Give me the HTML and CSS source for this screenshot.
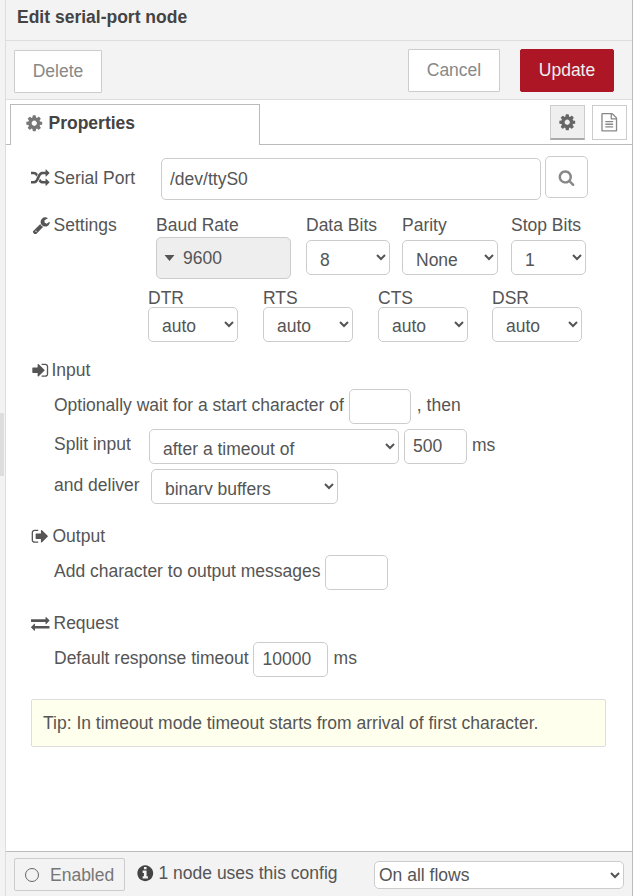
FILE: index.html
```html
<!DOCTYPE html>
<html lang="en">
<head>
<meta charset="UTF-8">
<title>Edit serial-port node</title>
<link rel="stylesheet" href="styles.css">
</head>
<body>

<div class="gutter"><div class="handle"></div></div>

<div class="tray">
  <div class="tray-title">Edit serial-port node</div>

  <div class="tray-toolbar">
    <button class="btn btn-delete">Delete</button>
    <div class="toolbar-right">
      <button class="btn btn-cancel">Cancel</button>
      <button class="btn btn-update">Update</button>
    </div>
  </div>

  <div class="tabs">
    <div class="tab">
      <svg class="icon icon-tab" viewBox="0 0 1792 1792"><path d="M1152 896q0-106-75-181t-181-75-181 75-75 181 75 181 181 75 181-75 75-181zm512-109v222q0 12-8 23t-20 13l-185 28q-19 54-39 91 35 50 107 138 10 12 10 25t-9 23q-27 37-99 108t-94 71q-12 0-26-9l-138-108q-44 23-91 38-16 136-29 186-7 28-36 28h-222q-14 0-24.500-8.500t-11.500-21.500l-28-184q-49-16-90-37l-141 107q-10 9-25 9-14 0-25-11-126-114-165-168-7-10-7-23 0-12 8-23 15-21 51-66.500t54-70.500q-27-50-41-99l-183-27q-13-2-21-12.500t-8-23.500v-222q0-12 8-23t19-13l186-28q14-46 39-92-40-57-107-138-10-12-10-24 0-10 9-23 26-36 98.500-107.500t94.500-71.500q13 0 26 10l138 107q44-23 91-38 16-136 29-186 7-28 36-28h222q14 0 24.500 8.500t11.500 21.500l28 184q49 16 90 37l142-107q9-9 24-9 13 0 25 10 129 119 165 170 7 8 7 22 0 12-8 23-15 21-51 66.500t-54 70.500q26 50 41 98l183 28q13 2 21 12.500t8 23.500z"/></svg>
      Properties
    </div>
    <div class="tab-buttons">
      <button class="tab-btn active"><svg class="icon icon-btn" viewBox="0 0 1792 1792"><path d="M1152 896q0-106-75-181t-181-75-181 75-75 181 75 181 181 75 181-75 75-181zm512-109v222q0 12-8 23t-20 13l-185 28q-19 54-39 91 35 50 107 138 10 12 10 25t-9 23q-27 37-99 108t-94 71q-12 0-26-9l-138-108q-44 23-91 38-16 136-29 186-7 28-36 28h-222q-14 0-24.500-8.500t-11.500-21.500l-28-184q-49-16-90-37l-141 107q-10 9-25 9-14 0-25-11-126-114-165-168-7-10-7-23 0-12 8-23 15-21 51-66.500t54-70.500q-27-50-41-99l-183-27q-13-2-21-12.500t-8-23.500v-222q0-12 8-23t19-13l186-28q14-46 39-92-40-57-107-138-10-12-10-24 0-10 9-23 26-36 98.500-107.500t94.500-71.500q13 0 26 10l138 107q44-23 91-38 16-136 29-186 7-28 36-28h222q14 0 24.500 8.500t11.500 21.500l28 184q49 16 90 37l142-107q9-9 24-9 13 0 25 10 129 119 165 170 7 8 7 22 0 12-8 23-15 21-51 66.500t-54 70.500q26 50 41 98l183 28q13 2 21 12.500t8 23.500z"/></svg></button>
      <button class="tab-btn"><svg class="icon icon-btn icon-doc" viewBox="0 0 1792 1792"><path d="M1596 380q28 28 48 76t20 88v1152q0 40-28 68t-68 28h-1344q-40 0-68-28t-28-68v-1600q0-40 28-68t68-28h896q40 0 88 20t76 48zm-444-244v376h376q-10-29-22-41l-313-313q-12-12-41-22zm384 1528v-1024h-416q-40 0-68-28t-28-68v-416h-768v1536h1280zm-1024-864q0-14 9-23t23-9h704q14 0 23 9t9 23v64q0 14-9 23t-23 9h-704q-14 0-23-9t-9-23v-64zm736 224q14 0 23 9t9 23v64q0 14-9 23t-23 9h-704q-14 0-23-9t-9-23v-64q0-14 9-23t23-9h704zm0 256q14 0 23 9t9 23v64q0 14-9 23t-23 9h-704q-14 0-23-9t-9-23v-64q0-14 9-23t23-9h704z"/></svg></button>
    </div>
  </div>

  <div class="form">
    <div class="row-port">
      <label class="row-label">
        <svg class="icon" viewBox="0 0 1792 1792"><path d="M666 481q-60 92-137 273-22-45-37-72.500t-40.500-63.500-51-56.500-63-35-81.500-14.500h-224q-14 0-23-9t-9-23v-192q0-14 9-23t23-9h224q250 0 410 225zm1126 799q0 14-9 23l-320 320q-9 9-23 9-13 0-22.500-9.500t-9.500-22.500v-192q-32 0-85 .5t-81 1-73-1-71-5-64-10.500-63-18.500-58-28.500-59-40-55-53.500-56-69.500q59-93 136-273 22 45 37 72.500t40.500 63.500 51 56.500 63 35 81.500 14.500h256v-192q0-14 9-23t23-9q12 0 24 10l319 319q9 9 9 23zm0-896q0 14-9 23l-320 320q-9 9-23 9-13 0-22.500-9.500t-9.500-22.500v-192h-256q-48 0-87 15t-69 45-51 61.500-45 77.500q-32 62-78 171-29 66-49.500 111t-54 105-64 100-74 83-90 68.500-106.500 42-128 16.500h-224q-14 0-23-9t-9-23v-192q0-14 9-23t23-9h224q48 0 87-15t69-45 51-61.500 45-77.500q32-62 78-171 29-66 49.500-111t54-105 64-100 74-83 90-68.500 106.500-42 128-16.500h256v-192q0-14 9-23t23-9q12 0 24 10l319 319q9 9 9 23z"/></svg>
        Serial Port
      </label>
      <input class="field field-port" type="text" value="/dev/ttyS0">
      <button class="search-btn"><svg class="icon icon-search" viewBox="0 0 1792 1792"><path d="M1216 832q0-185-131.500-316.500t-316.500-131.500-316.500 131.500-131.500 316.500 131.500 316.500 316.500 131.500 316.500-131.500 131.500-316.500zm512 832q0 52-38 90t-90 38q-54 0-90-38l-343-342q-179 124-399 124-143 0-273.500-55.500t-225-150-150-225-55.500-273.500 55.500-273.500 150-225 225-150 273.500-55.500 273.500 55.500 225 150 150 225 55.500 273.500q0 220-124 399l343 343q37 37 37 90z"/></svg></button>
    </div>

    <div class="row-settings">
      <label class="row-label settings-label">
        <svg class="icon" viewBox="0 0 1792 1792"><path d="M448 1472q0-26-19-45t-45-19-45 19-19 45 19 45 45 19 45-19 19-45zm644-420l-682 682q-37 37-90 37-52 0-91-37l-106-108q-38-36-38-90 0-53 38-91l681-681q39 98 114.500 173.500t173.500 114.500zm634-435q0 39-23 106-47 134-164.500 217.500t-258.500 83.500q-185 0-316.500-131.500t-131.500-316.500 131.500-316.500 316.500-131.500q58 0 121.500 16.500t107.500 46.500q16 11 16 28t-16 28l-293 169v224l193 107q5-3 79-48.500t135.500-81 70.500-35.500q15 0 23.500 10t8.500 25z"/></svg>
        Settings
      </label>
      <div class="col col-baud">
        <span class="col-label">Baud Rate</span>
        <div class="baud">
          <svg class="caret" viewBox="0 0 10 6"><polygon points="0,0 10,0 5,6"/></svg>
          9600
        </div>
      </div>
      <div class="col col-data">
        <span class="col-label">Data Bits</span>
        <select class="field sel sel-data"><option>8</option></select>
      </div>
      <div class="col col-parity">
        <span class="col-label">Parity</span>
        <select class="field sel sel-parity"><option>None</option></select>
      </div>
      <div class="col col-stop">
        <span class="col-label">Stop Bits</span>
        <select class="field sel sel-stop"><option>1</option></select>
      </div>
    </div>

    <div class="row-lines">
      <div class="line"><span class="line-label">DTR</span><select class="field sel sel-line"><option>auto</option></select></div>
      <div class="line"><span class="line-label">RTS</span><select class="field sel sel-line"><option>auto</option></select></div>
      <div class="line line-cts"><span class="line-label">CTS</span><select class="field sel sel-line"><option>auto</option></select></div>
      <div class="line line-last"><span class="line-label">DSR</span><select class="field sel sel-line"><option>auto</option></select></div>
    </div>

    <div class="heading heading-input">
      <svg class="icon" viewBox="0 0 1792 1792"><path d="M1312 896q0 26-19 45l-544 544q-19 19-45 19t-45-19-19-45v-288h-448q-26 0-45-19t-19-45v-384q0-26 19-45t45-19h448v-288q0-26 19-45t45-19 45 19l544 544q19 19 19 45zm352-352v704q0 119-84.500 203.500t-203.500 84.500h-320q-13 0-22.500-9.500t-9.500-22.500q0-4-1-20t-.5-26.500 3-23.500 10-19.500 20.500-6.500h320q66 0 113-47t47-113v-704q0-66-47-113t-113-47h-312l-11.500-1-11.500-3-8-5.500-7-9-2-13.500q0-4-1-20t-.5-26.500 3-23.500 10-19.500 20.500-6.500h320q119 0 203.500 84.500t84.500 203.500z"/></svg>
      Input
    </div>
    <div class="sub sub-start">
      <span>Optionally wait for a start character of</span>
      <input class="field small" type="text">
      <span class="sub-then">, then</span>
    </div>
    <div class="sub sub-split">
      <span class="sub-label sub-label-split">Split input</span>
      <select class="field sel sel-split"><option>after a timeout of</option></select>
      <input class="field small small-split" type="text" value="500">
      <span class="sub-unit">ms</span>
    </div>
    <div class="sub sub-deliver">
      <span class="sub-label sub-label-deliver">and deliver</span>
      <select class="field sel sel-deliver"><option>binary buffers</option></select>
    </div>

    <div class="heading heading-output">
      <svg class="icon" viewBox="0 0 1792 1792"><path d="M704 1440q0 4 1 20t.5 26.500-3 23.500-10 19.500-20.500 6.500h-320q-119 0-203.500-84.500t-84.500-203.500v-704q0-119 84.500-203.500t203.500-84.500h320q13 0 22.500 9.500t9.500 22.500q0 4 1 20t.5 26.500-3 23.500-10 19.500-20.500 6.500h-320q-66 0-113 47t-47 113v704q0 66 47 113t113 47h312l11.500 1 11.500 3 8 5.500 7 9 2 13.500zm928-544q0 26-19 45l-544 544q-19 19-45 19t-45-19-19-45v-288h-448q-26 0-45-19t-19-45v-384q0-26 19-45t45-19h448v-288q0-26 19-45t45-19 45 19l544 544q19 19 19 45z"/></svg>
      Output
    </div>
    <div class="sub sub-add">
      <span>Add character to output messages</span>
      <input class="field small small-add" type="text">
    </div>

    <div class="heading heading-request">
      <svg class="icon" viewBox="0 0 1792 1792"><path d="M1792 1184v192q0 13-9.500 22.500t-22.500 9.500h-1376v192q0 13-9.500 22.500t-22.500 9.500q-12 0-24-10l-319-320q-9-9-9-22 0-14 9-23l320-320q9-9 23-9 13 0 22.500 9.500t9.500 22.500v192h1376q13 0 22.500 9.500t9.500 22.500zm0-544q0 14-9 23l-320 320q-9 9-23 9-13 0-22.500-9.500t-9.500-22.500v-192h-1376q-13 0-22.500-9.500t-9.500-22.500v-192q0-13 9.500-22.500t22.500-9.500h1376v-192q0-14 9-23t23-9q12 0 24 10l319 319q9 9 9 23z"/></svg>
      Request
    </div>
    <div class="sub sub-timeout">
      <span>Default response timeout</span>
      <input class="field timeout" type="text" value="10000">
      <span class="sub-ms">ms</span>
    </div>

    <div class="tip">Tip: In timeout mode timeout starts from arrival of first character.</div>
  </div>

  <div class="footer">
    <button class="enabled"><span class="ring"></span>Enabled</button>
    <div class="config-note">
      <svg class="icon icon-info" viewBox="0 0 1792 1792"><path d="M1152 1376v-160q0-14-9-23t-23-9h-96v-512q0-14-9-23t-23-9h-320q-14 0-23 9t-9 23v160q0 14 9 23t23 9h96v320h-96q-14 0-23 9t-9 23v160q0 14 9 23t23 9h448q14 0 23-9t9-23zm-128-896v-160q0-14-9-23t-23-9h-192q-14 0-23 9t-9 23v160q0 14 9 23t23 9h192q14 0 23-9t9-23zm640 416q0 209-103 385.500t-279.500 279.500-385.500 103-385.500-103-279.500-279.500-103-385.500 103-385.500 279.500-279.500 385.500-103 385.500 103 279.500 279.500 103 385.500z"/></svg>
      1 node uses this config
    </div>
    <select class="field sel sel-scope"><option>On all flows</option></select>
  </div>
</div>

</body>
</html>
```

FILE: styles.css
```css
* { box-sizing: border-box; }
html, body { height: 100%; }
body { margin: 0; display: flex; height: 896px; overflow: hidden; background: #fff; color: #555; font-family: "Liberation Sans", Arial, sans-serif; font-size: 17.5px; }

.gutter { width: 6px; flex: none; background: #f3f3f3; border-right: 1px solid #ddd; position: relative; }
.handle { position: absolute; left: 0; top: 413px; width: 4px; height: 63px; background: #ddd; }

.tray { width: 627px; flex: none; display: flex; flex-direction: column; border-right: 1px solid #bbb; background: #fff; }

.tray-title { height: 41px; padding: 7px 11px 0; background: #f3f3f3; border-bottom: 1px solid #ddd; font-weight: bold; color: #444; line-height: 20px; }

.tray-toolbar { height: 59px; display: flex; justify-content: space-between; padding: 8px 18px 0 8px; background: #f3f3f3; border-bottom: 1px solid #ddd; }
.toolbar-right { display: flex; gap: 20px; }
.btn { height: 43px; font: inherit; background: #fff; color: #888; border: 1px solid #ccc; border-radius: 1px; padding: 0; }
.btn-delete { width: 88px; margin-top: 1px; }
.btn-cancel { width: 92px; }
.btn-update { width: 94px; background: #ad1625; border-color: #ad1625; color: #eee; border-radius: 2px; }

.tabs { height: 45px; display: flex; justify-content: space-between; padding: 4px 5px 0 4px; border-bottom: 1px solid #bbb; }
.tab { width: 250px; height: 41px; display: flex; align-items: center; gap: 5px; padding: 0 0 4px 14px; border: 1px solid #bbb; border-bottom: none; background: #fff; font-weight: bold; color: #444; position: relative; z-index: 1; }
.tab-buttons { display: flex; gap: 7px; padding-top: 1px; }
.tab-btn { width: 35px; height: 35px; padding: 0; display: flex; align-items: center; justify-content: center; background: #fff; border: 1px solid #ccc; color: #666; }
.tab-btn.active { background: #efefef; border-bottom: 2px solid #aaa; }

.icon { width: 18.5px; height: 18.5px; flex: none; fill: #555; }
.icon-tab { fill: #777; }
.icon-btn { fill: #666; }
.icon-doc { fill: #888; }
.icon-search { width: 17px; height: 17px; fill: #888; }
.icon-info { fill: #444; }

.form { flex: 1; padding: 0 0 0 25px; }

.field { font: inherit; color: #555; background: #fff; border: 1px solid #ccc; border-radius: 5px; height: 35px; }
input.field { padding: 0 8px; }
select.field { padding: 3px 0 0 9px; }

.row-label { display: flex; align-items: center; gap: 4px; line-height: 20px; }

.row-port { display: flex; align-items: flex-start; height: 42px; margin-top: 11px; }
.row-port .row-label { width: 130px; margin-top: 12px; }
.field-port { width: 380px; height: 42px; margin-top: 2px; }
.search-btn { width: 43px; height: 42px; margin-left: 4px; padding: 0; display: flex; align-items: center; justify-content: center; background: #fff; border: 1px solid #ccc; border-radius: 5px; }

.row-settings { display: flex; height: 67px; margin-top: 17px; }
.settings-label { width: 125px; height: 20px; padding-left: 1px; gap: 3px; }
.col { display: flex; flex-direction: column; }
.col-label { line-height: 20px; }
.col-baud { width: 150px; }
.baud { width: 135px; height: 42px; margin-top: 2px; display: flex; align-items: center; gap: 8px; padding-left: 7px; background: #eee; border: 1px solid #ccc; border-radius: 5px; }
.caret { width: 11px; height: 6px; fill: #555; }
.col-data { width: 96px; }
.col-parity { width: 109px; }
.col-stop { width: 75px; }
select.sel-data, select.sel-parity, select.sel-stop { padding-top: 5px; margin-top: 5px; }
.sel-data { width: 84px; }
.sel-parity { width: 96px; }
.sel-stop { width: 75px; }

.row-lines { display: flex; margin-top: 7px; padding-left: 117px; }
.line { width: 115px; display: flex; flex-direction: column; }
.line-cts { width: 114px; }
.line-last { width: 90px; }
.line-label { line-height: 18px; }
.sel-line { width: 90px; }

.heading { display: flex; align-items: center; gap: 4px; line-height: 20px; }
.heading-input { margin-top: 18px; gap: 2px; }
.heading-output { margin-top: 22px; gap: 3px; }
.heading-request { margin-top: 23px; }

.sub { display: flex; align-items: center; padding-left: 23px; gap: 5px; }
.sub > span { margin-top: -2px; }
.small { width: 62px; }
.small-split { width: 63px; }
.small-add { width: 63px; margin-left: -1px; }
input.timeout { width: 75px; margin-left: -1px; padding-left: 9px; }
.sub-then, .sub-ms { margin-left: 1px; }
.sub-start { margin-top: 9px; }
.sub-split { margin-top: 5px; }
.sub-deliver { margin-top: 5px; }
.sub-add { margin-top: 9px; }
.sub-timeout { margin-top: 9px; }
.sub > .sub-label-split { width: 90px; margin-top: -5px; }
.sub > .sub-label-deliver { width: 92px; margin-top: -3px; }
.sub > .sub-unit { margin-top: -3px; }
select.sel-split { width: 250px; padding-top: 4px; }
select.sel-deliver { width: 187px; height: 35px; padding: 8px 0 8px 9px; }

.tip { width: 575px; height: 48px; margin-top: 22px; padding: 0 11px; display: flex; align-items: center; background: #ffe; border: 1px solid #ddd; border-radius: 2px; }

.footer { height: 45px; display: flex; background: #f3f3f3; border-top: 1px solid #bbb; padding: 6px 8px 0; }
.enabled { width: 111px; height: 33px; display: flex; align-items: center; gap: 11px; padding: 2px 0 0 10px; font: inherit; color: #777; background: #f3f3f3; border: 1px solid #ccc; border-radius: 2px; }
.ring { width: 14px; height: 14px; border: 1px solid #666; border-radius: 50%; margin-top: -2px; }
.config-note { display: flex; align-items: center; gap: 4px; margin-left: 11px; height: 30px; width: 238px; }
select.sel-scope { width: 250px; height: 28px; margin-top: 3px; padding: 0; }
```
